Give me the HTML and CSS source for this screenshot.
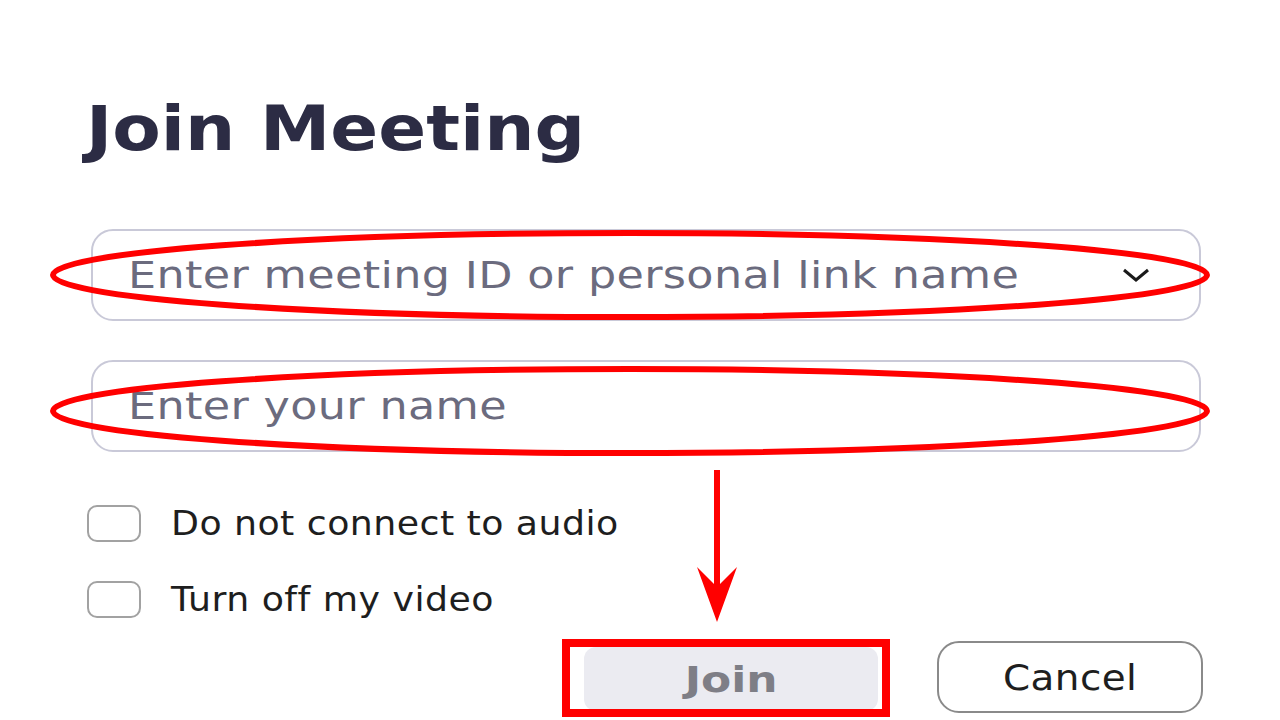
FILE: index.html
```html
<!DOCTYPE html>
<html lang="en">
<head>
  <meta charset="utf-8">
  <title>Join Meeting</title>
  <link rel="stylesheet" href="styles.css">
</head>
<body>
  <div class="dialog">
    <h1 class="title">Join Meeting</h1>
    <form class="fields">
      <div class="field">
        <span class="placeholder">Enter meeting ID or personal link name</span>
        <svg class="chevron" width="30" height="16" viewBox="0 0 30 16">
          <polyline points="3,3 15,13 27,3" fill="none" stroke="#1a1a1a" stroke-width="3"/>
        </svg>
      </div>
      <div class="field">
        <span class="placeholder">Enter your name</span>
      </div>
    </form>
    <div class="options">
      <label class="option"><span class="box"></span><span class="label">Do not connect to audio</span></label>
      <label class="option"><span class="box"></span><span class="label">Turn off my video</span></label>
    </div>
    <div class="actions">
      <span class="btn join"><span class="btn-text">Join</span></span>
      <span class="btn cancel"><span class="btn-text">Cancel</span></span>
    </div>
  </div>

  <!-- red annotations drawn over the dialog -->
  <svg class="marks" width="1280" height="720" viewBox="0 0 1280 720">
    <ellipse cx="630" cy="275" rx="577" ry="42" fill="none" stroke="#ff0000" stroke-width="6"/>
    <ellipse cx="630" cy="411" rx="577" ry="42" fill="none" stroke="#ff0000" stroke-width="6"/>
    <line x1="717" y1="470" x2="717" y2="590" stroke="#ff0000" stroke-width="6"/>
    <polygon points="697,567 717,587 737,567 717,622" fill="#ff0000"/>
    <rect x="566" y="643" width="320" height="70" fill="none" stroke="#ff0000" stroke-width="8"/>
  </svg>
</body>
</html>
```

FILE: styles.css
```css
html,
body {
  margin: 0;
  padding: 0;
}
body {
  width: 1280px;
  height: 720px;
  overflow: hidden;
  position: relative;
  background: #fff;
  font-family: "DejaVu Sans", Verdana, sans-serif;
}
.dialog {
  padding: 93px 0 0 91px;
}
.title {
  width: fit-content;
  margin: 0 0 0 -5px;
  font-size: 62px;
  line-height: 72px;
  font-weight: bold;
  color: #2c2c44;
  transform: scaleX(1.14);
  transform-origin: left center;
}
.fields {
  margin-top: 64px;
  display: flex;
  flex-direction: column;
  gap: 39px;
}
.field {
  box-sizing: border-box;
  width: 1110px;
  height: 92px;
  border: 2px solid #c9c9d8;
  border-radius: 22px;
  padding: 0 48px 0 35px;
  display: flex;
  align-items: center;
  justify-content: space-between;
}
.placeholder {
  font-size: 38px;
  color: #6b6b7e;
  letter-spacing: 0.3px;
  transform: scaleX(1.17);
  transform-origin: left center;
}
.options {
  margin-top: 52px;
  display: flex;
  flex-direction: column;
  gap: 37px;
}
.option {
  display: flex;
  align-items: center;
  gap: 30px;
  margin-left: -4px;
  font-size: 33px;
  color: #1e1e1e;
  letter-spacing: 0.4px;
}
.label {
  display: inline-block;
  transform: scaleX(1.1);
  transform-origin: left center;
}
.box {
  box-sizing: border-box;
  width: 54px;
  height: 37px;
  border: 2px solid #a2a2a2;
  border-radius: 10px;
}
.actions {
  width: 1112px;
  margin-top: 22px;
  display: flex;
  justify-content: flex-end;
  align-items: flex-start;
  gap: 59px;
}
.btn {
  box-sizing: border-box;
  display: flex;
  align-items: center;
  justify-content: center;
  font-size: 36px;
}
.btn-text {
  display: inline-block;
  transform: scaleX(1.08);
}
.join {
  width: 294px;
  height: 64px;
  margin-top: 6px;
  border-radius: 12px;
  background: #ebebf1;
  color: #7e7e86;
  font-weight: bold;
}
.join .btn-text {
  transform: scaleX(1.22);
}
.cancel {
  width: 266px;
  height: 72px;
  border: 2px solid #8a8a8a;
  border-radius: 22px;
  color: #1e1e1e;
  letter-spacing: 0.4px;
}
.marks {
  position: absolute;
  left: 0;
  top: 0;
  pointer-events: none;
}
```
